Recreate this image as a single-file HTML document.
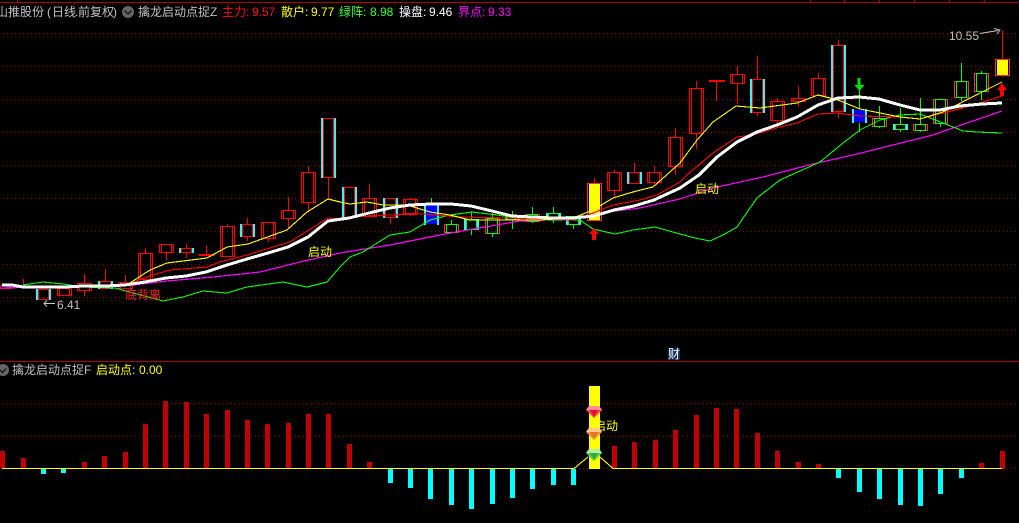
<!DOCTYPE html>
<html><head><meta charset="utf-8"><style>
html,body{margin:0;padding:0;background:#000;width:1019px;height:523px;overflow:hidden}
svg{display:block}
text{font-family:"Liberation Sans","WenQuanYi Zen Hei","Noto Sans CJK SC",sans-serif;font-size:12px}
.n{fill:none}
.c{shape-rendering:crispEdges}
</style></head><body>
<svg width="1019" height="523" viewBox="0 0 1019 523" xmlns="http://www.w3.org/2000/svg">
<rect width="1019" height="523" fill="#000"/>
<g class="c">
<path d="M0 2.500H1019M0 361.500H1019" stroke="#b00000" stroke-width="1"/>
<path d="M17.500 0v2M810.500 0v2M844.500 0v2M879.500 0v2M914.500 0v2M949.500 0v2M984.500 0v2" stroke="#b00000"/>
<path d="M3 33.500H1019M3 66.500H1019M3 99.500H1019M3 132.500H1019M3 165.500H1019M3 198.500H1019M3 231.500H1019M3 264.500H1019M3 297.500H1019M3 330.500H1019M3 403.500H1019M3 436.500H1019M3 468.500H1019" stroke="#8c0000" stroke-dasharray="1 3"/>
</g>

<!-- cyan side bars -->
<g class="c" fill="#40f0f0">
<path d="M36 289h2v11h-2zM49 289h2v11h-2zM98 281h2v8h-2zM111 281h2v8h-2zM179 248h2v5h-2zM192 248h2v5h-2zM240 224h2v13h-2zM253 224h2v13h-2zM321 118h2v60h-2zM334 118h2v60h-2zM342 187h2v31h-2zM355 187h2v31h-2zM383 198h2v20h-2zM396 198h2v20h-2zM424 204h2v21h-2zM437 204h2v21h-2zM464 219h2v11h-2zM477 219h2v11h-2zM505 216h2v4h-2zM518 216h2v4h-2zM546 213h2v6h-2zM559 213h2v6h-2zM566 216h2v9h-2zM579 216h2v9h-2zM627 172h2v12h-2zM640 172h2v12h-2zM750 79h2v34h-2zM763 79h2v34h-2zM831 45h2v67h-2zM844 45h2v67h-2zM852 109h2v14h-2zM865 109h2v14h-2zM893 124h2v6h-2zM906 124h2v6h-2z"/>
</g>
<!-- filled bodies -->
<g class="c">
<rect x="426" y="205" width="11" height="19" fill="#0000ff"/>
<rect x="854" y="110" width="11" height="12" fill="#0000ff"/>
<rect x="589" y="183" width="11" height="37" fill="#ffff00"/>
<rect x="997" y="59" width="11" height="16" fill="#ffff00"/>
</g>
<!-- red candles -->
<path class="c n" stroke="#ff0000" d="
M0.500 285.500h10v3h-10zM23.500 279v6
M57.500 288.500h14v7h-14zM59.500 288.500h10v7h-10z
M77.500 283.500h14v7h-14zM79.500 283.500h10v7h-10zM84.500 274v9M84.500 291v5
M118.500 282.500h14v6h-14zM120.500 282.500h10v6h-10zM125.500 275v7
M138.500 253.500h14v26h-14zM140.500 253.500h10v26h-10zM145.500 248v5
M159.500 244.500h14v8h-14zM161.500 244.500h10v8h-10zM166.500 253v7
M199.500 254.500h15v1h-15zM206.500 245v9
M220.500 226.500h14v30h-14zM222.500 226.500h10v30h-10zM227.500 224v2
M261.500 222.500h14v16h-14zM263.500 222.500h10v16h-10zM268.500 239v3
M281.500 210.500h14v8h-14zM283.500 210.500h10v8h-10zM288.500 197v13M288.500 219v9
M301.500 172.500h14v30h-14zM303.500 172.500h10v30h-10zM308.500 166v6M308.500 203v10
M362.500 198.500h14v18h-14zM364.500 198.500h10v18h-10zM369.500 184v14
M403.500 199.500h14v14h-14zM405.500 199.500h10v14h-10zM410.500 198v1M410.500 214v2
M607.500 172.500h14v18h-14zM609.500 172.500h10v18h-10zM614.500 170v2M614.500 191v5
M647.500 172.500h14v10h-14zM649.500 172.500h10v10h-10zM654.500 166v6M654.500 183v1
M668.500 137.500h14v29h-14zM670.500 137.500h10v29h-10zM675.500 128v9M675.500 167v8
M689.500 88.500h14v45h-14zM691.500 88.500h10v45h-10zM696.500 81v7M696.500 134v15
M709.500 80.500h15v1h-15zM716.500 82v19
M730.500 74.500h14v9h-14zM732.500 74.500h10v9h-10zM737.500 66v8M737.500 84v20
M770.500 101.500h14v19h-14zM772.500 101.500h10v19h-10zM777.500 98v3M777.500 121v2
M791.500 98.500h14v3h-14zM793.500 98.500h10v3h-10zM798.500 86v12M798.500 102v5
M811.500 78.500h14v17h-14zM813.500 78.500h10v17h-10zM818.500 73v5
"/>
<!-- red inner for cyan-sided -->
<path class="c n" stroke="#ff0000" d="
M38.500 289.500h10v10h-10zM43.500 299v1
M100.500 281.500h10v7h-10zM105.500 269v12
M181.500 248.500h10v4h-10zM186.500 244v4M186.500 253v5
M242.500 224.500h10v12h-10zM247.500 218v6M247.500 237v4
M323.500 118.500h10v59h-10zM328.500 178v21
M344.500 187.500h10v30h-10z
M385.500 198.500h10v19h-10zM390.500 218v6
M629.500 172.500h10v11h-10zM634.500 163v9
M752.500 79.500h10v33h-10zM757.500 56v23M757.500 113v3
M833.500 45.500h10v66h-10zM838.500 40v5M838.500 112v6
"/>
<path class="c n" stroke="#ff3030" d="
M444.500 224.500h14v8h-14z
M485.500 218.500h14v15h-14z
M525.500 214.500h14v7h-14z
M872.500 118.500h14v8h-14z
M913.500 124.500h14v6h-14z
M933.500 99.500h14v24h-14z
M954.500 81.500h14v16h-14z
M974.500 73.500h14v18h-14z
M587.500 183.500h14v37h-14z
M995.500 59.500h14v16h-14z"/>
<path class="c n" stroke="#ff0000" d="M594.500 178v5M1002.500 30v29M1002.500 76v1"/>
<!-- green candles -->
<path class="c n" stroke="#00ff00" d="
M446.500 224.500h10v8h-10zM451.500 220v4
M487.500 218.500h10v15h-10zM492.500 213v5M492.500 234v3
M527.500 214.500h10v7h-10zM532.500 207v7M532.500 222v1
M466.500 219.500h10v10h-10zM471.500 212v7M471.500 230v5
M507.500 216.500h10v3h-10zM512.500 211v5M512.500 220v9
M548.500 213.500h10v5h-10zM553.500 207v6M553.500 219v4
M568.500 216.500h10v8h-10zM573.500 225v4
M874.500 118.500h10v8h-10zM879.500 106v12M879.500 127v1
M895.500 124.500h10v5h-10zM900.500 108v16M900.500 130v2
M915.500 124.500h10v6h-10zM920.500 98v26M920.500 131v1
M935.500 99.500h10v24h-10zM940.500 124v3
M956.500 81.500h10v16h-10zM961.500 63v18M961.500 98v3
M976.500 73.500h10v18h-10zM981.500 71v2M981.500 92v8
M431.500 198v6M859.500 90v19M859.500 123v9"/>

<!-- moving averages -->
<g fill="none" stroke-linejoin="round" class="c">
<polyline stroke="#ff00ff" stroke-width="1.200" points="0,288 133,285 167,281 213,277 260,272 300,262 340,253 390,245 440,235 473,229 520,221 573,219 607,212 640,208 680,199 713,188 763,177 813,164 853,155 893,145 933,135 967,123 1002,111"/>
<polyline stroke="#00ff00" stroke-width="1.100" points="23,285 43,282 63,284 83,287 115,288 133,293 163,301 183,297 203,291 227,293 247,287 283,282 307,287 327,282 340,267 350,257 363,252 390,235 410,232 430,220 450,215 472,212 497,215 517,218 553,220 580,220 593,229 615,234 633,230 655,227 680,234 695,238 710,241 725,234 737,227 757,198 780,180 820,162 843,143 860,130 880,120 900,115 920,114 943,123 963,131 977,132 1002,133"/>
<polyline stroke="#ff0000" stroke-width="1.100" points="125,285 153,275 170,270 207,267 220,262 247,255 273,247 290,242 328,218 340,219 363,216 390,215 423,214 460,217 507,218 573,220 593,213 613,205 640,200 657,195 680,182 687,175 713,153 737,137 752,135 780,127 797,123 818,114 838,113 860,116 900,117 920,119 943,113 963,108 980,103 1002,96"/>
<polyline stroke="#ffff00" stroke-width="1.100" points="130,283 150,270 167,263 207,258 227,247 248,244 287,230 307,212 328,199 340,202 350,204 367,202 383,205 407,205 430,212 450,215 470,220 517,220 540,220 573,218 593,210 613,198 633,192 653,187 680,163 697,140 713,122 736,106 760,108 797,103 818,95 838,100 860,109 900,117 920,119 943,112 980,93 1002,82"/>
<polyline stroke="#ffffff" stroke-width="3" points="2,285 12,285 23,287 64,287 84,286 105,286 125,285 145,282 166,278 186,276 206,272 227,265 247,259 268,253 288,247 308,237 328,221 349,218 369,213 390,208 410,205 431,204 451,204 471,206 492,211 512,216 532,217 553,218 573,218 594,216 614,210 634,206 654,200 680,188 699,175 717,157 737,142 757,132 777,125 797,117 818,105 838,98 859,97 879,99 900,105 920,110 940,110 960,106 982,104 1002,103"/>
</g>

<!-- arrows -->
<path fill="#ff0000" d="M594 228l5 6h-3v6h-4v-6h-3zM1002 83l5 7h-3v6h-4v-6h-3z"/>
<path fill="#00e000" d="M857.500 78h3v7h4l-5 6-5-6h3z"/>
<path fill="none" stroke="#c8c8c8" d="M980 33.500l18-3M994 28.500l6 1.500-3 4"/>
<path fill="none" stroke="#c8c8c8" d="M55 303.500H44M47 300.500l-3 3 3 3"/>

<!-- upper text -->
<text x="-4" y="16" fill="#c0c0c0">山推股份</text>
<text x="47" y="16" fill="#c0c0c0">(</text>
<text x="52" y="16" fill="#c0c0c0">日线</text>
<text x="75" y="16" fill="#c0c0c0">.</text>
<text x="78" y="16" fill="#c0c0c0">前复权</text>
<text x="113" y="16" fill="#c0c0c0">)</text>
<circle cx="128" cy="12" r="6" fill="#666"/>
<path d="M124.500 10.500l3.500 3.500 3.500-3.500" fill="none" stroke="#1a1a1a" stroke-width="1.500"/>
<text x="138" y="16" fill="#c0c0c0">擒龙启动点捉Z</text>
<text x="222" y="16" fill="#ff1010">主力:</text><text x="252" y="16" fill="#ff1010">9.57</text>
<text x="281" y="16" fill="#ffff00">散户:</text><text x="311" y="16" fill="#ffff00">9.77</text>
<text x="339" y="16" fill="#33ff33">绿阵:</text><text x="370" y="16" fill="#33ff33">8.98</text>
<text x="399" y="16" fill="#ffffff">操盘:</text><text x="429" y="16" fill="#ffffff">9.46</text>
<text x="458" y="16" fill="#ff00ff">界点:</text><text x="488" y="16" fill="#ff00ff">9.33</text>
<text x="949" y="40" fill="#c0c0c0">10.55</text>
<text x="57" y="309" fill="#c0c0c0">6.41</text>
<text x="125" y="299" fill="#ff2020">底背离</text>
<text x="308" y="256" fill="#ffff00">启动</text>
<text x="695" y="193" fill="#ffff00">启动</text>
<rect x="668" y="348" width="12" height="12" fill="#12305c"/>
<text x="668" y="358" fill="#ffffff">财</text>

<!-- lower panel -->
<circle cx="3" cy="370" r="6" fill="#666"/>
<path d="M0 370l2.500 2.500 3.500-4" fill="none" stroke="#1a1a1a" stroke-width="1.500"/>
<text x="12" y="374" fill="#c0c0c0">擒龙启动点捉F</text>
<text x="96" y="374" fill="#ffff00">启动点:</text><text x="139" y="374" fill="#ffff00">0.00</text>

<path class="c" fill="#c00000" d="M0 451h5v17h-5zM21 458h5v10h-5zM82 462h5v6h-5zM102 456h5v12h-5zM123 452h5v16h-5zM143 424h5v44h-5zM163 401h5v67h-5zM184 402h5v66h-5zM204 414h5v54h-5zM225 410h5v58h-5zM245 420h5v48h-5zM265 424h5v44h-5zM286 423h5v45h-5zM306 414h5v54h-5zM326 414h5v54h-5zM347 444h5v24h-5zM367 462h5v6h-5zM612 446h5v22h-5zM632 442h5v26h-5zM653 440h5v28h-5zM673 430h5v38h-5zM694 415h5v53h-5zM714 408h5v60h-5zM734 409h5v59h-5zM755 433h5v35h-5zM775 451h5v17h-5zM796 462h5v6h-5zM816 464h5v4h-5zM979 463h5v5h-5zM1000 451h5v18h-5z"/>
<path class="c" fill="#00ffff" d="M41 469h5v5h-5zM61 469h5v4h-5zM388 469h5v14h-5zM408 469h5v19h-5zM428 469h5v30h-5zM449 469h5v36h-5zM469 469h5v40h-5zM490 469h5v35h-5zM510 469h5v29h-5zM530 469h5v20h-5zM551 469h5v16h-5zM571 469h5v16h-5zM836 469h5v9h-5zM857 469h5v23h-5zM877 469h5v30h-5zM898 469h5v36h-5zM918 469h5v37h-5zM938 469h5v25h-5zM959 469h5v9h-5z"/>
<rect class="c" x="589" y="386" width="11" height="83" fill="#ffff00"/>
<path class="c" fill="none" stroke="#ffff00" stroke-width="1.100" d="M2 468.500H574L588 457M600 457L613 468.500H1002"/>

<text x="594" y="430" fill="#ffff00">启动</text>
<!-- gems -->
<path d="M589 406h10l3 4-8 8-8-8z" fill="#ff4050"/>
<path d="M589 406h10l3 4h-16z" fill="#ff9098"/>
<path d="M590 410l4 7 4-7z" fill="#e01030"/>
<path d="M589 428h10l3 4-8 8-8-8z" fill="#f09040"/>
<path d="M589 428h10l3 4h-16z" fill="#ffc890"/>
<path d="M590 432l4 7 4-7z" fill="#e07820"/>
<path d="M589 449h10l3 4-8 8-8-8z" fill="#50d050"/>
<path d="M589 449h10l3 4h-16z" fill="#b0f0a0"/>
<path d="M590 453l4 7 4-7z" fill="#30b030"/>
</svg>
</body></html>
